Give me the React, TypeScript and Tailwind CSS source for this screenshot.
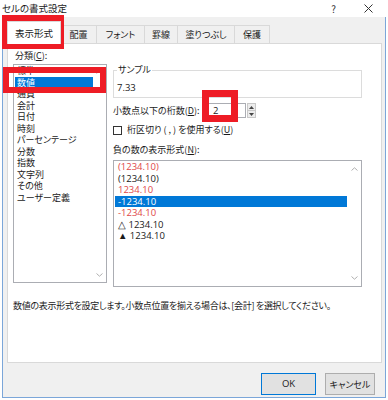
import React from "react";

const jp = "font-['Noto_Sans_CJK_JP','Noto_Sans',sans-serif] [font-feature-settings:'palt']";

function ChevronUp({ className }: { className?: string }) {
  return (
    <svg width="7" height="4" viewBox="0 0 7 4" className={className}>
      <path d="M0.5 3.5 L3.5 0.8 L6.5 3.5" fill="none" stroke="#b0b0b0" strokeWidth="1" />
    </svg>
  );
}
function ChevronDown({ className }: { className?: string }) {
  return (
    <svg width="7" height="4" viewBox="0 0 7 4" className={className}>
      <path d="M0.5 0.5 L3.5 3.2 L6.5 0.5" fill="none" stroke="#b0b0b0" strokeWidth="1" />
    </svg>
  );
}

export default function App() {
  const categories = [
    "標準",
    "数値",
    "通貨",
    "会計",
    "日付",
    "時刻",
    "パーセンテージ",
    "分数",
    "指数",
    "文字列",
    "その他",
    "ユーザー定義",
  ];
  const negatives: { t: string; red: boolean }[] = [
    { t: "(1234.10)", red: true },
    { t: "(1234.10)", red: false },
    { t: "1234.10", red: true },
    { t: "-1234.10", red: false },
    { t: "-1234.10", red: true },
    { t: "△ 1234.10", red: false },
    { t: "▲ 1234.10", red: false },
  ];
  const tabs: { t: string; w: string }[] = [
    { t: "配置", w: "w-[36px]" },
    { t: "フォント", w: "w-[48px]" },
    { t: "罫線", w: "w-[33px]" },
    { t: "塗りつぶし", w: "w-[57px]" },
    { t: "保護", w: "w-[35px]" },
  ];

  return (
    <div className={`w-[388px] h-[400px] bg-white relative overflow-hidden text-[9px] leading-none text-[#1a1a1a] ${jp}`}>
      {/* Title bar */}
      <div className="h-[17px] flex items-center pl-[2px] pr-[15px]">
        <span className="text-[9.5px]">セルの書式設定</span>
        <span className="ml-auto text-[10px] text-[#333]">?</span>
        <svg width="9" height="9" viewBox="0 0 9 9" className="ml-[28px]">
          <path d="M0.5 0.5 L8.5 8.5 M8.5 0.5 L0.5 8.5" stroke="#333" strokeWidth="1" />
        </svg>
      </div>

      {/* Body */}
      <div className="ml-[2px] mr-[2px] h-[381px] border-l border-r border-b border-[#7ba6d9] bg-[#f0f0f0] flex flex-col">
        {/* Tabs */}
        <div className="mt-[4px] h-[22px] pl-[4px] flex items-end">
          <div className="relative z-10 w-[54px] h-[23px] -mb-[1px] bg-white border-t border-l border-r border-[#d9d9d9] flex items-center justify-center pt-[2px] text-[9.5px]">
            表示形式
          </div>
          {tabs.map((tab) => (
            <div
              key={tab.t}
              className={`${tab.w} h-[18px] border-t border-r border-[#d9d9d9] bg-[#f0f0f0] flex items-center justify-center`}
            >
              {tab.t}
            </div>
          ))}
        </div>

        {/* Panel */}
        <div className="ml-[4px] w-[375px] h-[320px] bg-white border border-[#d9d9d9] flex flex-col">
          <div className="pt-[6px] pl-[5px] flex gap-[6px]">
            {/* Left column */}
            <div className="w-[94px] flex flex-col">
              <div className="h-[12px] leading-[12px] pl-[2px]">
                分類(<span className="underline">C</span>):
              </div>
              <div className="mt-[2px] h-[219px] border border-[#abadb3] flex overflow-hidden">
                <div className="flex-1 flex flex-col pl-[1px]">
                  {categories.map((c, i) => (
                    <div
                      key={c}
                      className={`h-[11.5px] leading-[11.5px] pl-[2px] ${i === 1 ? "bg-[#0078d7] text-white" : ""}`}
                    >
                      {c}
                    </div>
                  ))}
                </div>
                <div className="w-[13px] flex flex-col items-center justify-between py-[5px]">
                  <ChevronUp />
                  <ChevronDown />
                </div>
              </div>
            </div>

            {/* Right column */}
            <div className="w-[249px] flex flex-col">
              {/* Sample group */}
              <div className="mt-[20px] h-[28px] relative border border-[#dcdcdc]">
                <span className="absolute left-[3px] -top-[6px] bg-white px-[1px] leading-[10px]">サンプル</span>
                <div className="pl-[3px] pt-[12px] leading-[10px] font-['Open_Sans',sans-serif] text-[9.5px]">7.33</div>
              </div>

              {/* Decimal places */}
              <div className="mt-[5px] h-[15px] flex items-center">
                <div className="w-[93px] leading-[10px] whitespace-nowrap">
                  小数点以下の桁数(<span className="underline">D</span>):
                </div>
                <div className="w-[40px] h-[15px] border border-[#abadb3] bg-white flex items-center pl-[6px] font-['Open_Sans',sans-serif] text-[9.5px]">
                  2
                </div>
                <div className="ml-[1px] w-[9px] h-[15px] border border-[#c8c8c8] bg-[#ececec] flex flex-col">
                  <div className="flex-1 flex items-center justify-center border-b border-[#c8c8c8]">
                    <svg width="5" height="3" viewBox="0 0 5 3"><path d="M0 3 L2.5 0 L5 3 Z" fill="#444" /></svg>
                  </div>
                  <div className="flex-1 flex items-center justify-center">
                    <svg width="5" height="3" viewBox="0 0 5 3"><path d="M0 0 L2.5 3 L5 0 Z" fill="#444" /></svg>
                  </div>
                </div>
              </div>

              {/* Checkbox */}
              <div className="mt-[7px] h-[10px] flex items-center">
                <div className="w-[9px] h-[9px] border border-[#333] bg-white" />
                <span className="ml-[5px] leading-[10px] whitespace-nowrap">
                  桁区切り ( , ) を使用する(<span className="underline">U</span>)
                </span>
              </div>

              {/* Negative label */}
              <div className="mt-[10px] h-[10px] leading-[10px]">
                負の数の表示形式(<span className="underline">N</span>):
              </div>

              {/* Negative list */}
              <div className="mt-[5px] h-[127px] border border-[#abadb3] flex overflow-hidden">
                <div className="flex-1 flex flex-col pl-[1px] font-['Open_Sans',sans-serif] text-[9.5px]">
                  {negatives.map((n, i) => (
                    <div
                      key={i}
                      className={`h-[11.5px] leading-[11.5px] pl-[3px] ${
                        i === 3 ? "bg-[#0078d7] text-white" : n.red ? "text-[#e04848]" : "text-[#1a1a1a]"
                      }`}
                    >
                      {n.t}
                    </div>
                  ))}
                </div>
                <div className="w-[14px] flex flex-col items-center justify-between py-[6px]">
                  <ChevronUp />
                  <ChevronDown />
                </div>
              </div>
            </div>
          </div>

          {/* Description */}
          <div className="mt-[14px] pl-[5px] leading-[10px] tracking-[-0.3px] whitespace-nowrap">
            数値の表示形式を設定します。小数点位置を揃える場合は、[会計] を選択してください。
          </div>
        </div>

        {/* Buttons */}
        <div className="mt-[10px] flex justify-end gap-[9px] pr-[10px]">
          <div className="w-[55px] h-[22px] border border-[#0078d7] bg-[#e1e1e1] flex items-center justify-center font-['Open_Sans',sans-serif] text-[9.5px]">
            OK
          </div>
          <div className="w-[50px] h-[22px] border border-[#adadad] bg-[#e1e1e1] flex items-center justify-center">
            キャンセル
          </div>
        </div>
      </div>

      {/* Red highlight boxes */}
      <div className="absolute left-[2px] top-[15px] w-[62px] h-[34px] border-[6px] border-[#ee1c25]" />
      <div className="absolute left-[3px] top-[67px] w-[103px] h-[26px] border-[6px] border-[#ee1c25]" />
      <div className="absolute left-[202px] top-[90px] w-[36px] h-[32px] border-[7px] border-[#ee1c25]" />
    </div>
  );
}
